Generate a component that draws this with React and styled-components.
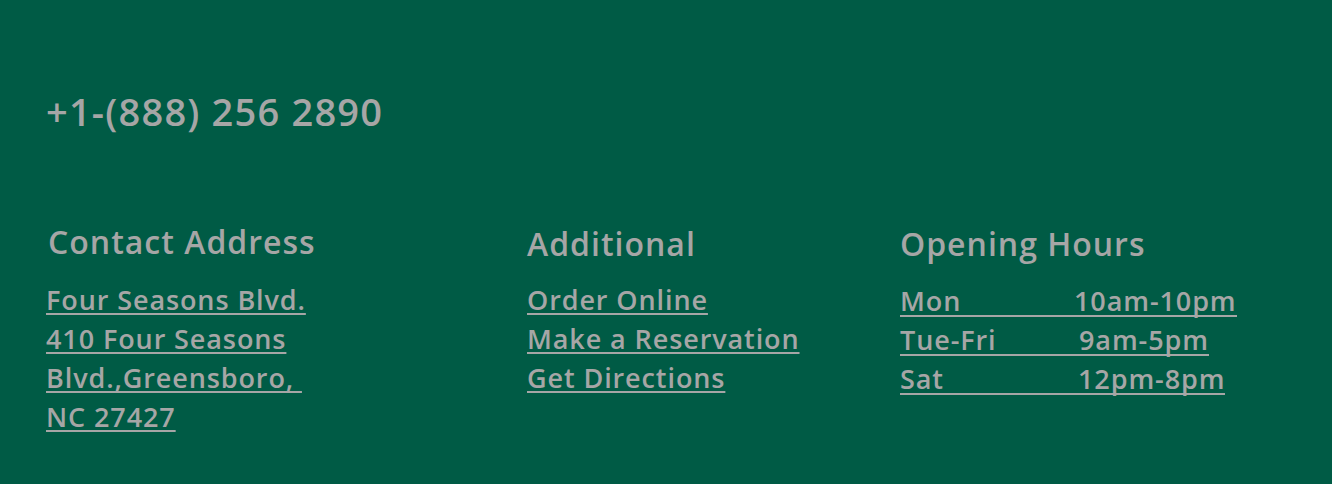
import styled, { createGlobalStyle } from "styled-components";

const Global = createGlobalStyle`
  html, body {
    margin: 0;
    padding: 0;
    background: #005b45;
  }
`

const Footer = styled.footer`
  width: 1332px;
  height: 484px;
  box-sizing: border-box;
  background-color: #005b45;
  color: #a6a6a6;
  font-family: 'Open Sans', 'Noto Sans', sans-serif;
  padding: 87px 0 0 46px;
`

const Phone = styled.h2`
  margin: 0;
  font-size: 38px;
  font-weight: 600;
  line-height: 48px;
  letter-spacing: 1.2px;
`

const Columns = styled.div`
  margin-top: 87px;
  display: grid;
  grid-template-columns: 481px 373px auto;
`

const Column = styled.div`
  display: flex;
  flex-direction: column;
`

const Heading = styled.h3`
  margin: 0 0 14px ${props => props.indent || 0}px;
  font-size: 32px;
  font-weight: 600;
  line-height: 44px;
  letter-spacing: 1px;
  transform: translateY(${props => props.shift || 0}px);
`

const LinkList = styled.div`
  display: flex;
  flex-direction: column;
  align-items: flex-start;
`

const Link = styled.a`
  color: inherit;
  font-size: 27px;
  font-weight: 600;
  line-height: 39px;
  letter-spacing: 0.9px;
  text-decoration: underline;
  text-decoration-thickness: 2px;
  text-underline-offset: 3px;
  white-space: pre;
`

const HourRow = styled.a`
  display: inline-flex;
  color: inherit;
  font-size: 27px;
  font-weight: 600;
  letter-spacing: 0.9px;
  line-height: 28px;
  height: 28px;
  margin: 7px 0 2px;
  border-bottom: 2px solid #a6a6a6;
  text-decoration: none;
`

const Day = styled.span`
  width: ${props => props.w}px;
`

function App() {
  return (
    <>
      <Global />
      <Footer>
        <Phone>+1-(888) 256 2890</Phone>
        <Columns>
          <Column>
            <Heading indent={2} shift={-2}>Contact Address</Heading>
            <LinkList>
              <Link href="#">Four Seasons Blvd.</Link>
              <Link href="#">410 Four Seasons</Link>
              <Link href="#">Blvd.,Greensboro, </Link>
              <Link href="#">NC 27427</Link>
            </LinkList>
          </Column>
          <Column>
            <Heading>Additional</Heading>
            <LinkList>
              <Link href="#">Order Online</Link>
              <Link href="#">Make a Reservation</Link>
              <Link href="#">Get Directions</Link>
            </LinkList>
          </Column>
          <Column>
            <Heading>Opening Hours</Heading>
            <LinkList>
              <HourRow href="#"><Day w={174}>Mon</Day>10am-10pm</HourRow>
              <HourRow href="#"><Day w={179}>Tue-Fri</Day>9am-5pm</HourRow>
              <HourRow href="#"><Day w={178}>Sat</Day>12pm-8pm</HourRow>
            </LinkList>
          </Column>
        </Columns>
      </Footer>
    </>
  );
}

export default App;
